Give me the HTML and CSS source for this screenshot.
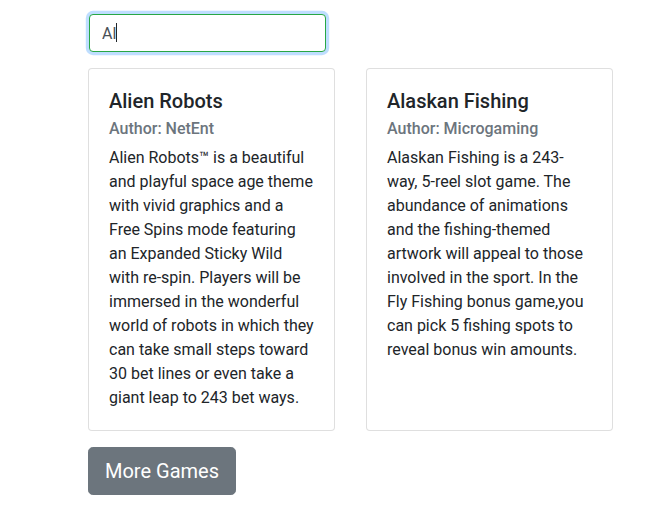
FILE: index.html
```html
<!DOCTYPE html>
<html lang="en">
<head>
<meta charset="utf-8">
<title>Games</title>
<link rel="stylesheet" href="styles.css">
</head>
<body>
  <main class="page">
    <div class="search">
      <input class="search-input" type="text" value="Al" aria-label="Search games">
      <span class="caret"></span>
    </div>

    <div class="cards">
      <article class="card">
        <h5 class="card-title">Alien Robots</h5>
        <h6 class="card-subtitle">Author: NetEnt</h6>
        <p class="card-text">Alien Robots™ is a beautiful and playful space age theme with vivid graphics and a Free Spins mode featuring an Expanded Sticky Wild with re-spin. Players will be immersed in the wonderful world of robots in which they can take small steps toward 30 bet lines or even take a giant leap to 243 bet ways.</p>
      </article>
      <article class="card">
        <h5 class="card-title">Alaskan Fishing</h5>
        <h6 class="card-subtitle">Author: Microgaming</h6>
        <p class="card-text">Alaskan Fishing is a 243-way, 5-reel slot game. The abundance of animations and the fishing-themed artwork will appeal to those involved in the sport. In the Fly Fishing bonus game,you can pick 5 fishing spots to reveal bonus win amounts.</p>
      </article>
    </div>

    <button class="btn-more" type="button">More Games</button>
  </main>
</body>
</html>
```

FILE: styles.css
```css
* {
  box-sizing: border-box;
}

html, body {
  margin: 0;
  background: #fff;
}

body {
  font-family: Roboto, "Liberation Sans", Arial, sans-serif;
  font-size: 16px;
  line-height: 1.5;
  color: #212529;
}

.page {
  width: 525px;
  margin-left: 88px;
  padding-top: 14px;
  display: flex;
  flex-direction: column;
  align-items: flex-start;
}

/* search field, shown focused */
.search {
  position: relative;
  margin-left: 1px;
}

.search-input {
  display: block;
  width: 237px;
  height: 38px;
  padding: 6px 12px;
  font: inherit;
  font-size: 16px;
  line-height: 1.5;
  color: #495057;
  background: #fff;
  border: 1px solid #28a745;
  border-radius: 4px;
  box-shadow: 0 0 0 3.2px rgba(0, 123, 255, 0.25);
  outline: none;
}

.caret {
  position: absolute;
  left: 27px;
  top: 9px;
  width: 1px;
  height: 19px;
  background: #212529;
}

/* game cards */
.cards {
  display: flex;
  gap: 31px;
  align-items: stretch;
  margin-top: 16px;
  width: 100%;
}

.card {
  flex: 0 0 247px;
  padding: 20px;
  background: #fff;
  border: 1px solid rgba(0, 0, 0, 0.125);
  border-radius: 4px;
}

.card-title {
  margin: 0 0 12px;
  font-size: 20px;
  font-weight: 500;
  line-height: 1.2;
}

.card-subtitle {
  margin: -6px 0 8px;
  font-size: 16px;
  font-weight: 500;
  line-height: 1.2;
  color: #6c757d;
}

.card-text {
  margin: 0;
}

/* footer button */
.btn-more {
  margin-top: 16px;
  padding: 8px 16px;
  font: inherit;
  font-size: 20px;
  line-height: 1.5;
  color: #fff;
  background: #6c757d;
  border: 1px solid #6c757d;
  border-radius: 4.8px;
  cursor: pointer;
}
```
